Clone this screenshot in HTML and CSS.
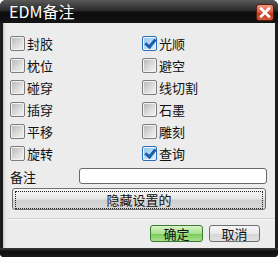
FILE: index.html
```html
<!DOCTYPE html>
<html lang="zh">
<head>
    <meta charset="UTF-8">
    <title>EDM备注</title>
    <link rel="stylesheet" href="styles.css">
</head>
<body>
    <div class="window">
        <div class="titlebar">
            <span class="title">EDM备注</span>
            <span class="close">
                <svg width="12" height="11" viewBox="0 0 12 11"><path d="M2 1.5 L10 9.5 M10 1.5 L2 9.5" stroke="#fff" stroke-width="2.6" stroke-linecap="round"/></svg>
            </span>
        </div>
        <div class="client">
            <div class="options">
                <label class="opt"><span class="box"></span>封胶</label>
                <label class="opt"><span class="box checked"></span>光顺</label>
                <label class="opt"><span class="box"></span>枕位</label>
                <label class="opt"><span class="box"></span>避空</label>
                <label class="opt"><span class="box"></span>碰穿</label>
                <label class="opt"><span class="box"></span>线切割</label>
                <label class="opt"><span class="box"></span>插穿</label>
                <label class="opt"><span class="box"></span>石墨</label>
                <label class="opt"><span class="box"></span>平移</label>
                <label class="opt"><span class="box"></span>雕刻</label>
                <label class="opt"><span class="box"></span>旋转</label>
                <label class="opt"><span class="box checked"></span>查询</label>
            </div>
            <div class="remark">
                <span class="remark-label">备注</span>
                <span class="input"></span>
            </div>
            <div class="hide-btn"><span class="focus">隐藏设置的</span></div>
            <div class="sep"></div>
            <div class="actions">
                <span class="btn ok">确定</span>
                <span class="btn">取消</span>
            </div>
        </div>
        <div class="bottom"></div>
    </div>
</body>
</html>
```

FILE: styles.css
```css
body { margin: 0; background: #fff; font-family: "Noto Sans CJK SC", "Liberation Sans", sans-serif; }
.window { width: 278px; height: 257px; display: flex; flex-direction: column; background: #1c1c1c; border-radius: 6px 6px 4px 4px; overflow: hidden; }
.titlebar { height: 23px; display: flex; align-items: center; justify-content: space-between; padding: 0 4px 0 9px; background: linear-gradient(#5a5a5a, #2a2a2a 45%, #0c0c0c 55%, #141414); }
.title { color: #fff; font-size: 16px; line-height: 23px; font-family: "Noto Sans CJK SC", sans-serif; }
.close { width: 18px; height: 17px; margin-top: 1px; display: flex; align-items: center; justify-content: center; border-radius: 3px; border: 1px solid #5a1a10; box-sizing: border-box; background: linear-gradient(#f09a84, #d8553a 50%, #c03418 55%, #d45a3a); }
.client { flex: 1; margin: 0 3px 0 3px; background: linear-gradient(to right, #c8c8c8, #ececec 3px, #ececec); padding: 9px 0 0 7px; display: flex; flex-direction: column; }
.options { display: grid; grid-template-columns: 132px 1fr; grid-auto-rows: 22px; }
.opt { display: flex; align-items: center; font-size: 13px; color: #111; }
.box { width: 13px; height: 13px; margin-right: 2px; border: 1px solid #7c7c7c; border-radius: 2px; background: linear-gradient(135deg, #b4b4b4, #dcdcdc 55%, #f6f6f6); box-shadow: inset 0 0 0 1px #f2f2f2; }
.box.checked { border-color: #2a6fb8; background: linear-gradient(135deg, #8cc4f0, #dff0fc); position: relative; }
.box.checked::after { content: ""; position: absolute; left: 4px; top: 0px; width: 4px; height: 8px; border: solid #1d5fa8; border-width: 0 3px 3px 0; transform: rotate(40deg); }
.remark { display: flex; align-items: center; margin-top: 4px; height: 16px; }
.remark-label { width: 69px; font-size: 13px; color: #111; }
.input { width: 188px; height: 16px; box-sizing: border-box; border: 1px solid #6a6a6a; border-radius: 3px; background: #fff; }
.hide-btn { margin: 4px 0 0 2px; width: 254px; height: 22px; box-sizing: border-box; border: 1px solid #707070; border-radius: 3px; background: linear-gradient(#f8f8f8, #e6e6e6 50%, #cfcfcf 55%, #dadada); padding: 2px; }
.focus { display: block; height: 16px; line-height: 16px; border: 1px dotted #222; text-align: center; font-size: 13px; color: #111; }
.sep { margin: 8px 0 0 -3px; height: 1px; background: #cfcfcf; border-bottom: 1px solid #fafafa; }
.actions { display: flex; justify-content: flex-end; gap: 6px; margin-top: 5px; padding-right: 15px; }
.btn { width: 51px; height: 17px; box-sizing: border-box; border: 1px solid #707070; border-radius: 3px; text-align: center; font-size: 13px; line-height: 15px; color: #111; background: linear-gradient(#f6f6f6, #e8e8e8 50%, #d6d6d6 55%, #e0e0e0); }
.btn.ok { width: 53px; border-color: #3c7a30; background: linear-gradient(#d8f4c8, #a8e08c 50%, #7ccc5a 55%, #a8e090); }
.bottom { height: 9px; background: linear-gradient(#3a3a3a, #0e0e0e 40%, #1a1a1a); }
```
